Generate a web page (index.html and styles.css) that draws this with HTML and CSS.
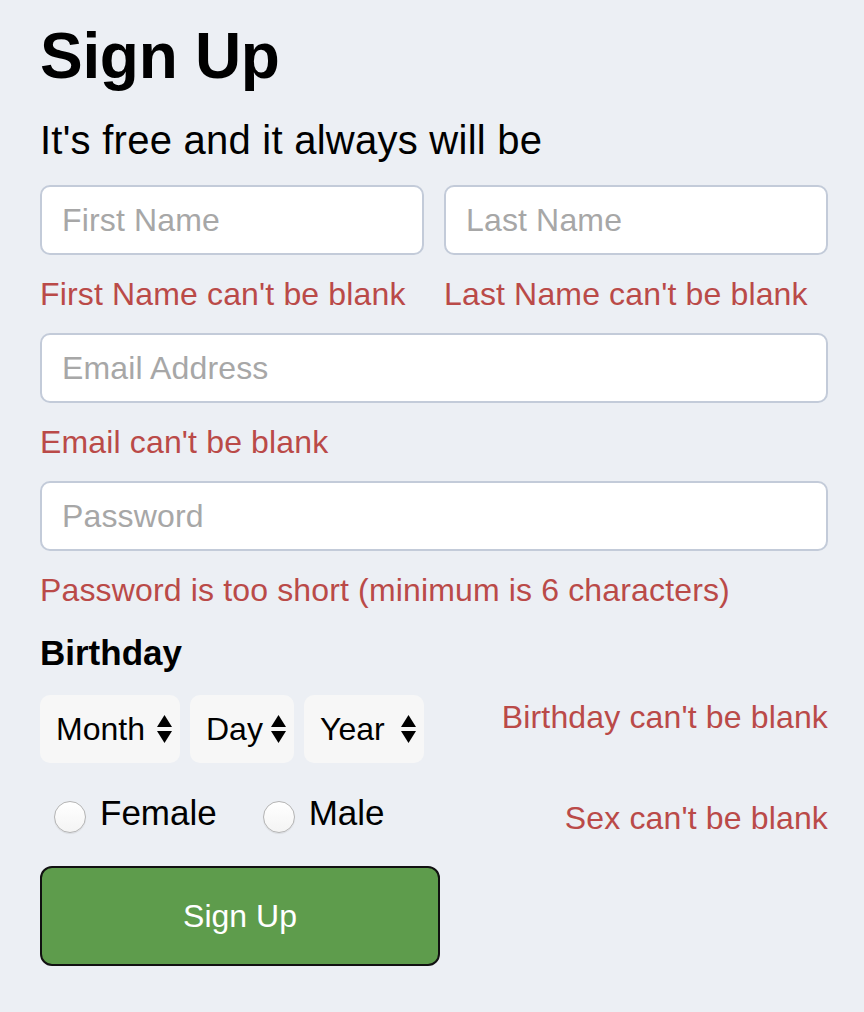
FILE: index.html
```html
<!DOCTYPE html>
<html lang="en">
<head>
<meta charset="utf-8">
<title>Sign Up</title>
<link rel="stylesheet" href="styles.css">
</head>
<body>
<form class="signup">
  <h1 class="title">Sign Up</h1>
  <p class="subtitle">It's free and it always will be</p>

  <div class="name-row">
    <div class="field">
      <input class="text-input" type="text" placeholder="First Name">
      <div class="error">First Name can't be blank</div>
    </div>
    <div class="field">
      <input class="text-input" type="text" placeholder="Last Name">
      <div class="error">Last Name can't be blank</div>
    </div>
  </div>

  <div class="field">
    <input class="text-input" type="email" placeholder="Email Address">
    <div class="error">Email can't be blank</div>
  </div>

  <div class="field">
    <input class="text-input" type="password" placeholder="Password">
    <div class="error">Password is too short (minimum is 6 characters)</div>
  </div>

  <div class="label">Birthday</div>
  <div class="birthday-row">
    <div class="selects">
      <div class="select-wrap select-month">
        <select class="select"><option>Month</option></select>
        <svg class="arrows" width="15" height="28" viewBox="0 0 15 28"><polygon points="7.5,0 15,12 0,12"/><polygon points="0,16 15,16 7.5,28"/></svg>
      </div>
      <div class="select-wrap select-day">
        <select class="select"><option>Day</option></select>
        <svg class="arrows" width="15" height="28" viewBox="0 0 15 28"><polygon points="7.5,0 15,12 0,12"/><polygon points="0,16 15,16 7.5,28"/></svg>
      </div>
      <div class="select-wrap select-year">
        <select class="select"><option>Year</option></select>
        <svg class="arrows" width="15" height="28" viewBox="0 0 15 28"><polygon points="7.5,0 15,12 0,12"/><polygon points="0,16 15,16 7.5,28"/></svg>
      </div>
    </div>
    <div class="error side-error birthday-error">Birthday can't be blank</div>
  </div>

  <div class="sex-row">
    <div class="radios">
      <label class="radio-label"><input class="radio" type="radio" name="sex"><span>Female</span></label>
      <label class="radio-label"><input class="radio" type="radio" name="sex"><span>Male</span></label>
    </div>
    <div class="error side-error sex-error">Sex can't be blank</div>
  </div>

  <button class="submit" type="button">Sign Up</button>
</form>
</body>
</html>
```

FILE: styles.css
```css
html, body {
  margin: 0;
  padding: 0;
  background: #eceff4;
}

body {
  font-family: "Liberation Sans", Arial, Helvetica, sans-serif;
  color: #000;
}

.signup {
  width: 788px;
  padding: 20px 36px 40px 40px;
  display: flex;
  flex-direction: column;
}

.title {
  margin: 0;
  font-size: 64px;
  line-height: 72px;
  font-weight: bold;
  letter-spacing: -0.3px;
}

.subtitle {
  margin: 24px 0 0;
  font-size: 40px;
  line-height: 48px;
  letter-spacing: 0.25px;
}

.name-row {
  margin-top: 21px;
  display: grid;
  grid-template-columns: 1fr 1fr;
  column-gap: 20px;
}

.field {
  display: flex;
  flex-direction: column;
}

.text-input {
  box-sizing: border-box;
  height: 70px;
  width: 100%;
  border: 2px solid #c3cbd9;
  border-radius: 10px;
  background: #fff;
  padding: 0 20px;
  font-family: inherit;
  font-size: 32px;
  letter-spacing: 0.15px;
  color: #000;
  outline: none;
}

.text-input::placeholder {
  color: #a7a7a7;
}

.error {
  color: #ba4a48;
  font-size: 32px;
  line-height: 40px;
  letter-spacing: 0.15px;
  margin: 19px 0 19px;
  white-space: nowrap;
}

.label {
  margin-top: 4px;
  font-size: 35px;
  line-height: 40px;
  font-weight: bold;
}

.birthday-row {
  margin-top: 22px;
  display: flex;
  justify-content: space-between;
  align-items: flex-start;
}

.selects {
  display: flex;
  gap: 10px;
}

.select-wrap {
  position: relative;
  height: 68px;
}

.select {
  -webkit-appearance: none;
  appearance: none;
  box-sizing: border-box;
  height: 68px;
  width: 100%;
  border: none;
  border-radius: 10px;
  background: #f7f7f7;
  padding: 0 0 0 16px;
  font-family: inherit;
  font-size: 32px;
  color: #000;
  outline: none;
}

.select-month { width: 140px; }
.select-day { width: 104px; }
.select-year { width: 120px; }

.arrows {
  position: absolute;
  right: 8px;
  top: 20px;
  fill: #000;
  pointer-events: none;
}

.side-error {
  margin: 0;
}

.birthday-error {
  margin-top: 2px;
}

.sex-row {
  margin-top: 30px;
  display: flex;
  justify-content: space-between;
  align-items: flex-start;
}

.radios {
  display: flex;
  gap: 46px;
  padding-left: 14px;
}

.radio-label {
  display: flex;
  align-items: flex-start;
  gap: 14px;
  font-size: 35px;
  line-height: 40px;
}

.radio {
  -webkit-appearance: none;
  appearance: none;
  margin: 8px 0 0;
  width: 32px;
  height: 32px;
  border-radius: 50%;
  border: 1px solid #b4b4b4;
  background: linear-gradient(#ffffff, #f4f4f4);
  box-shadow: 0 1px 1px rgba(0, 0, 0, 0.08);
  box-sizing: border-box;
}

.sex-error {
  margin-top: 5px;
}

.submit {
  margin-top: 28px;
  width: 400px;
  height: 100px;
  border: 2px solid #111;
  border-radius: 12px;
  background: #5e9c4c;
  color: #fff;
  font-family: inherit;
  font-size: 32px;
  cursor: pointer;
}
```
